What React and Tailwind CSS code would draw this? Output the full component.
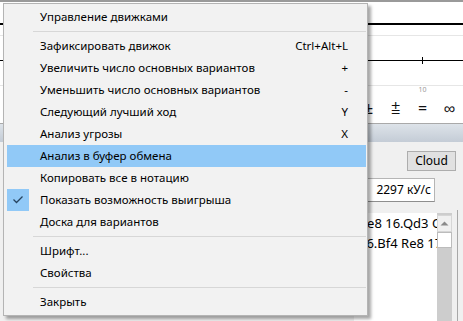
import React from 'react';

const menuItems = [
  { label: 'Управление движками' },
  { sep: true },
  { label: 'Зафиксировать движок', key: 'Ctrl+Alt+L' },
  { label: 'Увеличить число основных вариантов', key: '+' },
  { label: 'Уменьшить число основных вариантов', key: '-' },
  { label: 'Следующий лучший ход', key: 'Y' },
  { label: 'Анализ угрозы', key: 'X' },
  { label: 'Анализ в буфер обмена', active: true },
  { label: 'Копировать все в нотацию' },
  { label: 'Показать возможность выигрыша', checked: true },
  { label: 'Доска для вариантов' },
  { sep: true },
  { label: 'Шрифт...' },
  { label: 'Свойства' },
  { sep: true },
  { label: 'Закрыть' },
];

const MenuRow = ({ item }) => {
  if (item.sep) {
    return (
      <div className="flex h-[7px] items-center pl-[26px]">
        <div className="h-px flex-1 bg-[#d7d7d7]" />
      </div>
    );
  }
  return (
    <div className={`relative flex h-[22px] items-center pl-[33px] ${item.active ? 'bg-[#91c9f7]' : ''}`}>
      {item.checked && (
        <div className="absolute left-0 top-0 flex h-[22px] w-[22px] items-center justify-center bg-[#91c9f7]">
          <svg width="22" height="22" viewBox="0 0 22 22">
            <path d="M6.5 10.5 L9.5 13.5 L15.5 7.5" fill="none" stroke="#26435f" strokeWidth="1.3" />
          </svg>
        </div>
      )}
      <span>{item.label}</span>
      {item.key && <span className="ml-auto pr-[18px]">{item.key}</span>}
    </div>
  );
};

export default function App() {
  return (
    <div className="relative h-[321px] w-[463px] overflow-hidden bg-[#f0f0f0] font-['Noto_Sans',sans-serif] text-black">
      {/* window top border */}
      <div className="h-[2px] bg-[#9a9a9a]" />

      {/* evaluation graph */}
      <div className="flex h-[121px] flex-col bg-white">
        <svg width="463" height="91" viewBox="0 0 463 91">
          <rect x="0" y="21" width="463" height="2" fill="#000" />
          <rect x="0" y="33" width="463" height="1" fill="#e6e6e6" />
          <rect x="0" y="58" width="463" height="1" fill="#000" />
          <rect x="422" y="55" width="1" height="7" fill="#000" />
          <rect x="0" y="83" width="463" height="1" fill="#e6e6e6" />
          <text x="422.5" y="90" fontSize="7" fill="#9a9a9a" textAnchor="middle" fontFamily="Noto Sans, sans-serif">10</text>
        </svg>
        <div className="flex h-[30px] items-center pl-[355px] text-[16px] leading-none text-[#111]">
          <span className="w-[28px] text-center">±</span>
          <span className="w-[28px] text-center">⩲</span>
          <span className="w-[28px] text-center">=</span>
          <span className="w-[28px] text-center">∞</span>
        </div>
      </div>

      {/* panel header */}
      <div className="h-[19px] border-t border-[#a9a9a9] bg-gradient-to-b from-[#dde3e9] to-[#c4ccd6]" />

      {/* engine panel */}
      <div className="flex flex-col items-end text-[12px]">
        <div className="mr-[7px] mt-[9px] flex h-[20px] w-[49px] items-center justify-center border border-[#adadad] bg-[#e1e1e1]">
          Cloud
        </div>
        <div className="mr-[28px] mt-[7px] flex h-[24px] w-[120px] items-center justify-end border border-[#b5b5b5] border-b-[#8e8e8e] bg-white pr-[3px]">
          2297 кУ/с
        </div>
      </div>

      <div className="ml-[354px] mr-[5px] mt-[8px] flex h-[111px] border-r border-[#a8a8a8] pr-[5px] pt-[3px]">
        <div className="flex-1 overflow-hidden whitespace-nowrap bg-white pl-[5px] text-[13px] leading-[20px]">
          <div>Re8 16.Qd3 Qc7 17.Rfe1</div>
          <div>16.Bf4 Re8 17.Qd2 Bf5</div>
        </div>
        <div className="flex w-[15px] flex-col bg-[#cdcdcd]">
          <div className="mt-[2px] flex h-[17px] items-center justify-center border border-[#d6d6d6] bg-[#f0f0f0]">
            <svg width="9" height="5" viewBox="0 0 9 5">
              <path d="M0.5 4.5 L4.5 0.5 L8.5 4.5 Z" fill="#8a8a8a" />
            </svg>
          </div>
          <div className="h-[16px] border border-[#bcbcbc] bg-white" />
        </div>
      </div>

      {/* context menu */}
      <div className="absolute left-[3px] top-[3px] w-[365px] border border-[#b4b4b4] bg-[#f2f2f2] py-[2px] pl-[3px] pr-[1px] text-[11.5px] shadow-[3px_3px_3px_rgba(0,0,0,0.35)]">
        {menuItems.map((item, i) => (
          <MenuRow key={i} item={item} />
        ))}
      </div>
    </div>
  );
}
